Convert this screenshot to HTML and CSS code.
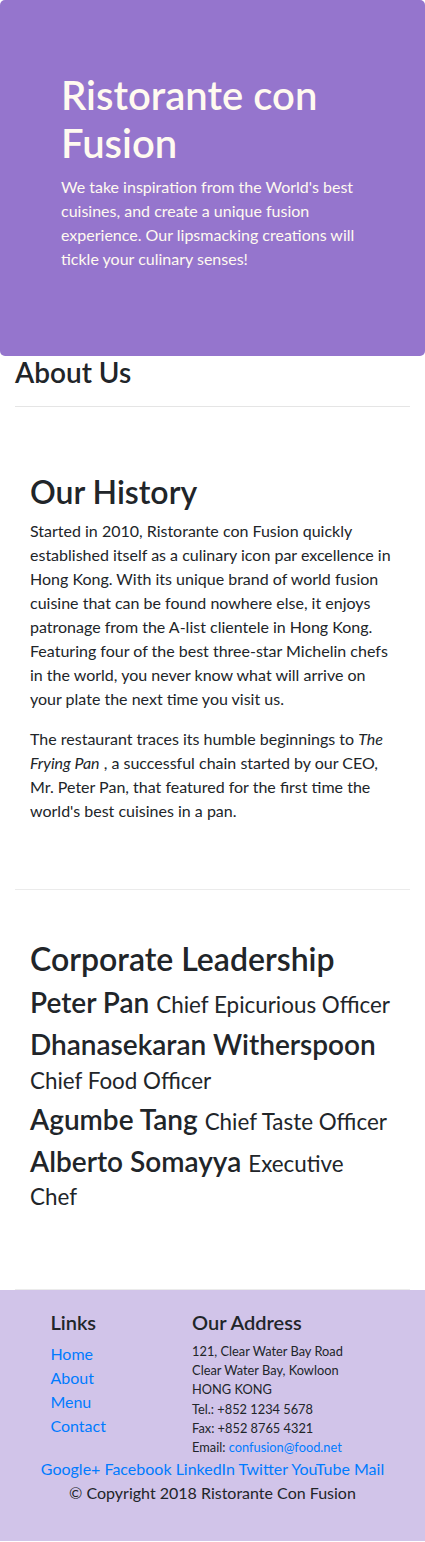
FILE: index.html
```html
<!DOCTYPE html>
<html lang="en">
<head>
<meta charset="utf-8">
<title>Ristorante con Fusion: About Us</title>
<link rel="stylesheet" href="styles.css">
</head>
<body>
<header class="jumbotron">
  <div class="jumbo-inner">
    <h1 class="jumbo-title">Ristorante con Fusion</h1>
    <p class="jumbo-text">We take inspiration from the World's best cuisines, and create a unique fusion experience. Our lipsmacking creations will tickle your culinary senses!</p>
  </div>
</header>

<main class="container">
  <div class="page-head">
    <h3 class="page-title">About Us</h3>
    <hr class="rule">
  </div>

  <section class="row-content">
    <h2 class="section-title">Our History</h2>
    <p class="text">Started in 2010, Ristorante con Fusion quickly established itself as a culinary icon par excellence in Hong Kong. With its unique brand of world fusion cuisine that can be found nowhere else, it enjoys patronage from the A-list clientele in Hong Kong. Featuring four of the best three-star Michelin chefs in the world, you never know what will arrive on your plate the next time you visit us.</p>
    <p class="text">The restaurant traces its humble beginnings to <em>The Frying Pan</em> , a successful chain started by our CEO, Mr. Peter Pan, that featured for the first time the world's best cuisines in a pan.</p>
  </section>

  <section class="row-content">
    <h2 class="section-title">Corporate Leadership</h2>
    <h3 class="leader">Peter Pan <small class="role">Chief Epicurious Officer</small></h3>
    <h3 class="leader">Dhanasekaran Witherspoon <small class="role">Chief Food Officer</small></h3>
    <h3 class="leader">Agumbe Tang <small class="role">Chief Taste Officer</small></h3>
    <h3 class="leader">Alberto Somayya <small class="role">Executive Chef</small></h3>
  </section>
</main>

<footer class="footer">
  <div class="footer-cols">
    <div class="footer-links">
      <h5 class="footer-heading">Links</h5>
      <ul class="link-list">
        <li><a href="#">Home</a></li>
        <li><a href="#">About</a></li>
        <li><a href="#">Menu</a></li>
        <li><a href="#">Contact</a></li>
      </ul>
    </div>
    <div class="footer-address">
      <h5 class="footer-heading">Our Address</h5>
      <address class="address">121, Clear Water Bay Road<br>Clear Water Bay, Kowloon<br>HONG KONG<br>Tel.: +852 1234 5678<br>Fax: +852 8765 4321<br>Email: <a href="#">confusion@food.net</a></address>
    </div>
  </div>
  <div class="social">
    <a href="#">Google+</a> <a href="#">Facebook</a> <a href="#">LinkedIn</a> <a href="#">Twitter</a> <a href="#">YouTube</a> <a href="#">Mail</a>
  </div>
  <p class="copyright">© Copyright 2018 Ristorante Con Fusion</p>
</footer>
</body>
</html>
```

FILE: styles.css
```css
html, body {
  margin: 0;
  padding: 0;
}

body {
  font-family: Lato, "Open Sans", sans-serif;
  font-size: 16px;
  line-height: 1.5;
  color: #212529;
  background: #fff;
}

a {
  color: #007bff;
  text-decoration: none;
}

.jumbotron {
  background: #9575cd;
  color: #fffaf0;
  border-radius: 5px;
  padding: 71px 61px 69px;
}

.jumbo-title {
  font-size: 40px;
  line-height: 1.2;
  font-weight: 600;
  margin: 0 0 8px;
}

.jumbo-text {
  margin: 0 0 16px;
}

.container {
  padding: 0 15px;
}

.page-title {
  font-size: 28px;
  line-height: 1.2;
  font-weight: 600;
  margin: 0 0 8px;
}

.rule {
  border: 0;
  border-top: 1px solid rgba(0, 0, 0, 0.1);
  margin: 16px 0;
}

.row-content {
  box-sizing: border-box;
  min-height: 400px;
  padding: 50px 15px;
  border-bottom: 1px solid #ebebeb;
}

.section-title {
  font-size: 32px;
  line-height: 1.2;
  font-weight: 600;
  margin: 0 0 8px;
}

.text {
  margin: 0 0 16px;
}

.leader {
  font-size: 28px;
  line-height: 1.2;
  font-weight: 600;
  margin: 0 0 8px;
}

.role {
  font-size: 80%;
  font-weight: 400;
}

.footer {
  background: #d1c4e9;
  padding: 20px 0;
}

.footer-cols {
  display: grid;
  grid-template-columns: 141.7px 1fr;
  padding: 0 15px 0 50.4px;
}

.footer-heading {
  font-size: 20px;
  line-height: 1.2;
  font-weight: 600;
  margin: 0 0 8px;
}

.link-list {
  list-style: none;
  margin: 0 0 16px;
  padding: 0;
}

.address {
  font-style: normal;
  font-size: 12.8px;
  line-height: 19.2px;
  margin: 0;
}

.social {
  text-align: center;
}

.copyright {
  text-align: center;
  margin: 0 0 16px;
}
```
